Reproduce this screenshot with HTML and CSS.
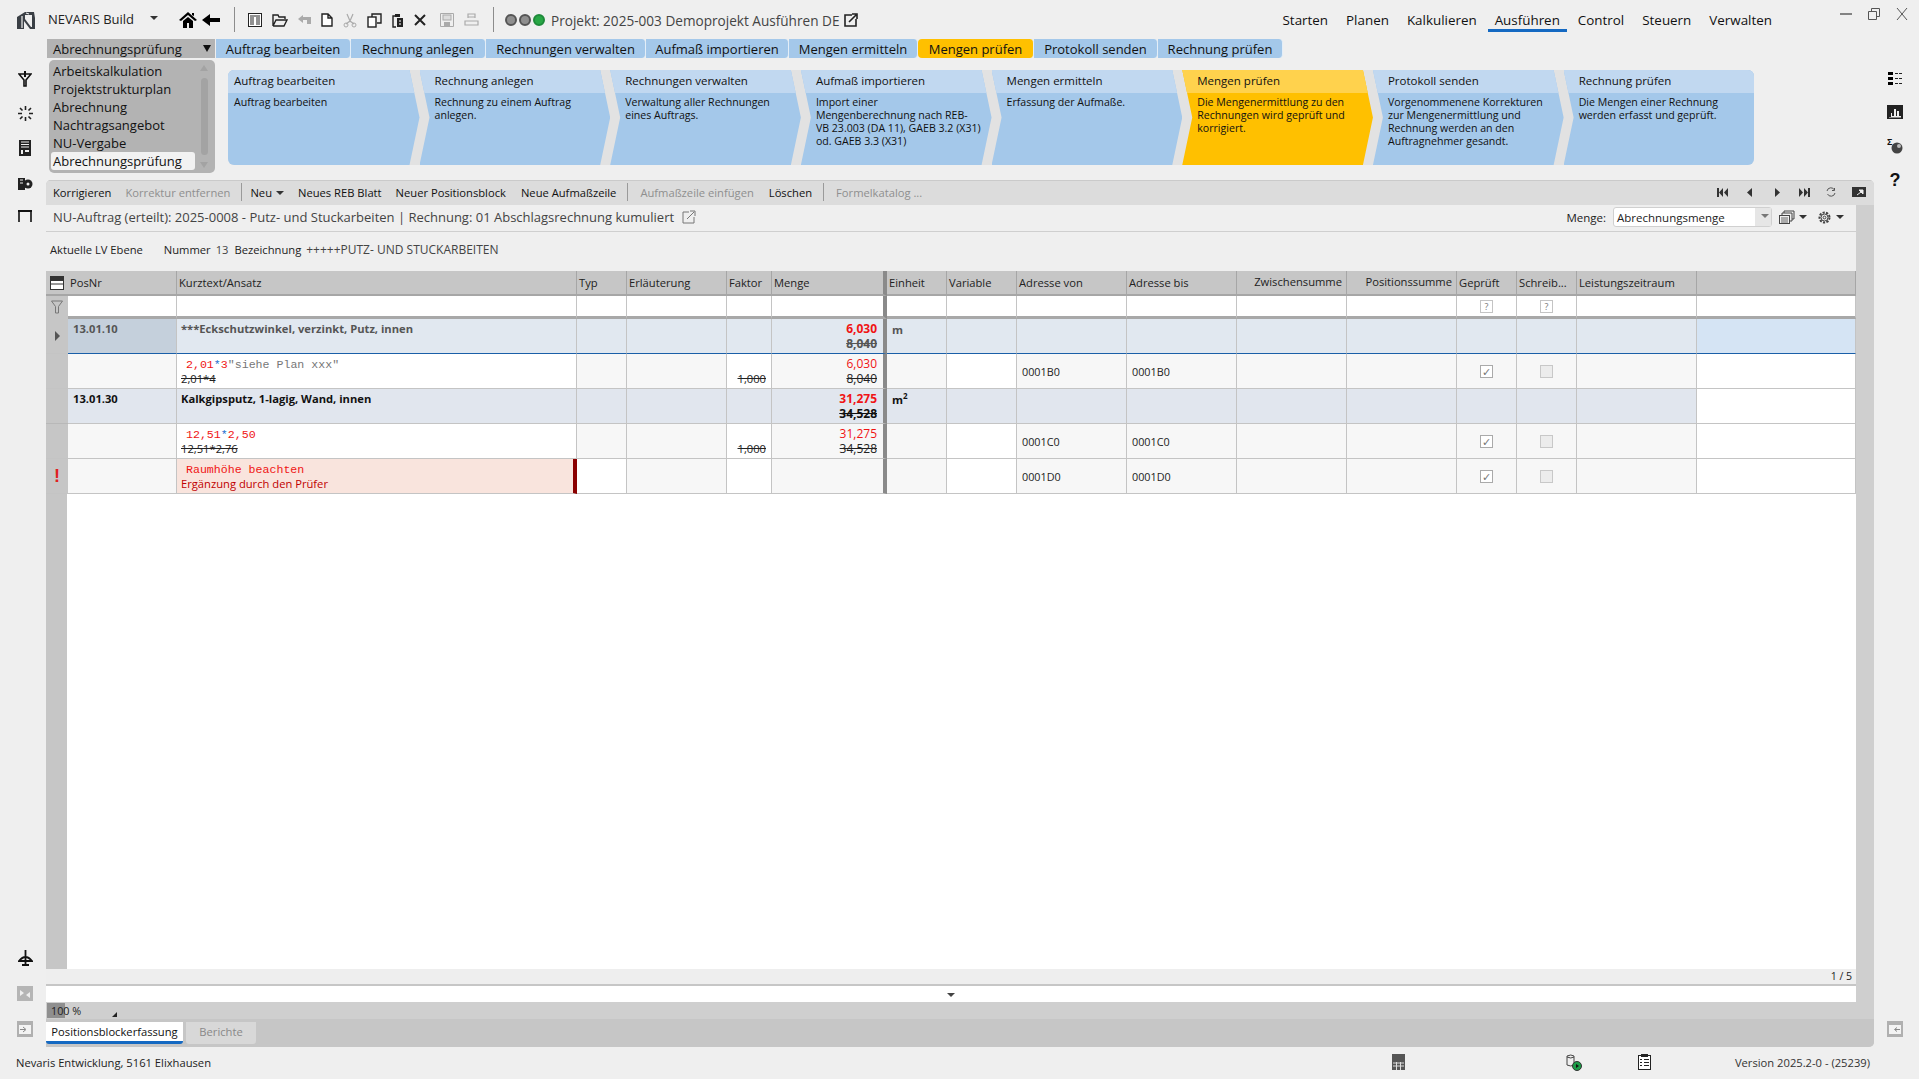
FILE: index.html
```html
<!DOCTYPE html>
<html lang="de">
<head>
  <meta charset="UTF-8">
  <title>NEVARIS Build</title>
  <link rel="stylesheet" href="styles.css">
</head>
<body>
  <!-- Titelleiste -->
  <header class="titlebar">
    <svg class="logo" width="20" height="20" viewBox="0 0 20 20"><path d="M1 7 L9 2 L18 2 L19 8 V19 H14 L8 11 V19 H1Z" fill="#3a3f45"/><path d="M6 6 V18 M13 4 L10 3" stroke="#efefef" stroke-width="1.2"/><path d="M9 5 H16 V17 H15 L9 9Z" fill="#efefef"/></svg>
    <span class="app-name">NEVARIS Build</span>
    <span class="caret app-caret"></span>
    <div class="quick">
      <svg width="18" height="18" viewBox="0 0 18 18"><path d="M9 1 L18 9 L16 10 L9 4 L2 10 L0 9Z M4 10 L9 6 L14 10 V17 H10 V12 H8 V17 H4Z M13 2 H15 V5 L13 4Z"/></svg>
      <svg width="18" height="18" viewBox="0 0 18 18"><path d="M0 9 L8 3 V7 H18 V11 H8 V15Z"/></svg>
    </div>
    <i class="tsep"></i>
    <div class="quick-files">
      <svg width="14" height="14" viewBox="0 0 14 14"><rect x=".5" y=".5" width="13" height="13" fill="#fff" stroke="#222"/><path d="M2 3 H12 M2 5 H6 M8 5 H12 M2 7 H6 M8 7 H12 M2 9 H6 M8 9 H12 M2 11 H6 M8 11 H12" stroke="#222"/></svg>
      <svg width="16" height="14" viewBox="0 0 16 14"><path d="M1 13 V2 H6 L7 4 H13 V6 M1 13 H12 L15 7 H4 L1 13" fill="none" stroke="#222" stroke-width="1.4"/></svg>
      <svg class="off" width="13" height="14" viewBox="0 0 13 14"><path d="M0 6 L5 2 V4 H13 V11 H9 V7 H5 V10Z" fill="#aaa"/></svg>
      <svg width="12" height="14" viewBox="0 0 12 14"><path d="M1 1 H7 L11 5 V13 H1Z M7 1 V5 H11" fill="#fff" stroke="#222" stroke-width="1.4"/></svg>
      <svg width="14" height="15" viewBox="0 0 14 15"><path d="M4 1 L7 8 L10 1 M7 8 L3 11 M7 8 L11 11" fill="none" stroke="#aaa" stroke-width="1.2"/><circle cx="3" cy="12" r="2" fill="none" stroke="#aaa"/><circle cx="11" cy="12" r="2" fill="none" stroke="#aaa"/></svg>
      <svg width="15" height="15" viewBox="0 0 15 15"><path d="M5 4 V1 H14 V10 H10" fill="none" stroke="#222" stroke-width="1.4"/><rect x="1" y="4" width="8" height="10" fill="#fff" stroke="#222" stroke-width="1.4"/></svg>
      <svg width="12" height="15" viewBox="0 0 12 15"><path d="M3 3 H1 V14 H4" fill="none" stroke="#222" stroke-width="1.4"/><rect x="3" y="1" width="5" height="3" fill="#222"/><rect x="5" y="5" width="6" height="9" fill="#222"/><path d="M7 8 H9 M7 11 H9" stroke="#fff"/></svg>
      <svg width="12" height="12" viewBox="0 0 12 12"><path d="M1 1 L11 11 M11 1 L1 11" stroke="#222" stroke-width="2"/></svg>
      <svg class="save" width="14" height="14" viewBox="0 0 14 14"><path d="M.5 .5 H13.5 V13.5 H.5Z" fill="none" stroke="#aaa"/><rect x="3" y="2" width="8" height="5" fill="#ddd" stroke="#aaa"/><rect x="4" y="9" width="6" height="4" fill="#aaa"/></svg>
      <svg width="15" height="14" viewBox="0 0 15 14"><path d="M4 5 V1 H11 V5 M1 8 H14 V12 H1Z M4 4 H11" fill="none" stroke="#aaa" stroke-width="1.2"/></svg>
    </div>
    <i class="tsep"></i>
    <div class="lights"><b></b><b></b><b class="green"></b></div>
    <span class="project">Projekt: 2025-003 Demoprojekt Ausführen DE</span>
    <svg class="ext" width="14" height="14" viewBox="0 0 14 14"><path d="M8 2 H1 V13 H12 V6" fill="none" stroke="#222" stroke-width="1.6"/><path d="M5 9 L12 2 M8 1 H13 V6" fill="none" stroke="#222" stroke-width="1.6"/></svg>
    <nav class="menu">
      <a>Starten</a><a>Planen</a><a>Kalkulieren</a><a class="active">Ausführen</a><a>Control</a><a>Steuern</a><a>Verwalten</a>
    </nav>
    <div class="winbtns">
      <svg width="12" height="12" viewBox="0 0 12 12"><path d="M0 6 H12" stroke="#555" stroke-width="1.4"/></svg>
      <svg width="12" height="12" viewBox="0 0 12 12"><path d="M.5 3.5 H8.5 V11.5 H.5Z M3.5 3 V.5 H11.5 V8.5 H9" fill="none" stroke="#555"/></svg>
      <svg width="12" height="12" viewBox="0 0 12 12"><path d="M1 0 L11 12 M11 0 L1 12" stroke="#555"/></svg>
    </div>
  </header>

  <div class="workspace">
    <!-- linke Leiste -->
    <aside class="rail">
      <div class="rail-top">
        <svg width="14" height="16" viewBox="0 0 14 16"><path d="M1 3 H13 L8 9 V15 H6 V9Z" fill="none" stroke="#111" stroke-width="1.6"/><path d="M7 0 V6" stroke="#111" stroke-width="2"/></svg>
        <svg width="15" height="15" viewBox="0 0 15 15"><path d="M7.5 0 V4 M7.5 11 V15 M0 7.5 H4 M11 7.5 H15 M2 2 L4.5 4.5 M10.5 10.5 L13 13 M13 2 L10.5 4.5 M2 13 L4.5 10.5" stroke="#222" stroke-width="1.6"/></svg>
        <svg width="12" height="16" viewBox="0 0 12 16"><rect width="12" height="16" fill="#222"/><path d="M2 2 H10 M2 4.5 H10 M2 7 H10" stroke="#efefef"/><rect x="2" y="10" width="2" height="4" fill="#efefef"/><rect x="6" y="10" width="4" height="2" fill="#efefef"/></svg>
        <svg width="16" height="16" viewBox="0 0 16 16"><path d="M1 3 H8 V15 H1Z" fill="#222"/><circle cx="11" cy="9" r="4.5" fill="#222"/><circle cx="11" cy="9" r="1.5" fill="#efefef"/><path d="M3 5 H6 M3 8 H6" stroke="#efefef"/></svg>
        <svg width="14" height="12" viewBox="0 0 14 12"><path d="M0 1 H14" stroke="#111" stroke-width="2"/><path d="M1 2 V12 M13 2 V12" stroke="#111" stroke-width="1.6"/></svg>
      </div>
      <div class="rail-bottom">
        <svg width="15" height="16" viewBox="0 0 15 16"><path d="M7.5 0 V16 M1 11 Q7.5 3 14 11 Z M4 15 H11" fill="none" stroke="#111" stroke-width="1.8"/></svg>
        <svg width="16" height="15" viewBox="0 0 16 15"><rect width="16" height="15" fill="#b5b5b5"/><path d="M3 4 L7 7 L3 10Z M13 6 L9 9 L13 12Z" fill="#efefef"/></svg>
        <svg width="16" height="16" viewBox="0 0 16 16"><rect width="16" height="16" fill="#b0b0b0"/><rect x="2" y="4" width="12" height="9" fill="#f3f3f3"/><path d="M3 8.5 H8 M6 6 L9 8.5 L6 11" fill="none" stroke="#888"/></svg>
      </div>
    </aside>

    <main class="center">
      <!-- Prozessleiste -->
      <div class="ribbon">
        <div class="module-select">Abrechnungsprüfung<span class="caret module-caret"></span></div>
        <div class="tabs">
          <a class="w1">Auftrag bearbeiten</a>
          <a class="w2">Rechnung anlegen</a>
          <a class="w3">Rechnungen verwalten</a>
          <a class="w4">Aufmaß importieren</a>
          <a class="w5">Mengen ermitteln</a>
          <a class="w6 on">Mengen prüfen</a>
          <a class="w7">Protokoll senden</a>
          <a class="w8">Rechnung prüfen</a>
        </div>
      </div>

      <div class="overview">
        <div class="modules">
          <ul>
            <li>Arbeitskalkulation</li>
            <li>Projektstrukturplan</li>
            <li>Abrechnung</li>
            <li>Nachtragsangebot</li>
            <li>NU-Vergabe</li>
            <li class="sel">Abrechnungsprüfung</li>
          </ul>
          <div class="scroll"><i class="up"></i><b></b><i class="down"></i></div>
        </div>

        <div class="steps">
          <section class="step first"><h3>Auftrag bearbeiten</h3><p>Auftrag bearbeiten</p></section>
          <section class="step"><h3>Rechnung anlegen</h3><p>Rechnung zu einem Auftrag anlegen.</p></section>
          <section class="step"><h3>Rechnungen verwalten</h3><p>Verwaltung aller Rechnungen eines Auftrags.</p></section>
          <section class="step"><h3>Aufmaß importieren</h3><p class="tight">Import einer<br>Mengenberechnung nach REB-<br>VB 23.003 (DA 11), GAEB 3.2 (X31)<br>od. GAEB 3.3 (X31)</p></section>
          <section class="step"><h3>Mengen ermitteln</h3><p>Erfassung der Aufmaße.</p></section>
          <section class="step on"><h3>Mengen prüfen</h3><p>Die Mengenermittlung zu den Rechnungen wird geprüft und korrigiert.</p></section>
          <section class="step"><h3>Protokoll senden</h3><p>Vorgenommenene Korrekturen zur Mengenermittlung und Rechnung werden an den Auftragnehmer gesandt.</p></section>
          <section class="step last"><h3>Rechnung prüfen</h3><p>Die Mengen einer Rechnung werden erfasst und geprüft.</p></section>
        </div>
      </div>

      <!-- Hauptbereich -->
      <div class="panel">
        <div class="toolbar">
          <a>Korrigieren</a>
          <a class="off">Korrektur entfernen</a>
          <i class="sep"></i>
          <a class="neu">Neu<span class="caret"></span></a>
          <a>Neues REB Blatt</a>
          <a>Neuer Positionsblock</a>
          <a class="more">Neue Aufmaßzeile</a>
          <i class="sep"></i>
          <a class="off more">Aufmaßzeile einfügen</a>
          <a class="more">Löschen</a>
          <i class="sep"></i>
          <a class="off more">Formelkatalog ...</a>
          <div class="pager">
            <svg width="11" height="9" viewBox="0 0 11 9"><path d="M0 0 H2 V9 H0Z M6 0 V9 L2 4.5Z M11 0 V9 L7 4.5Z" fill="#333"/></svg>
            <svg class="pg-a" width="5" height="9" viewBox="0 0 5 9"><path d="M5 0 V9 L0 4.5Z" fill="#333"/></svg>
            <svg class="pg-b" width="5" height="9" viewBox="0 0 5 9"><path d="M0 0 V9 L5 4.5Z" fill="#333"/></svg>
            <svg class="pg-a" width="11" height="9" viewBox="0 0 11 9"><path d="M11 0 H9 V9 H11Z M5 0 V9 L9 4.5Z M0 0 V9 L4 4.5Z" fill="#333"/></svg>
            <svg width="10" height="10" viewBox="0 0 10 10"><path d="M1 4 A4 4 0 0 1 8.5 3 M8.5 1 V3.5 H6 M9 6 A4 4 0 0 1 1.5 7" fill="none" stroke="#555"/></svg>
            <svg width="14" height="10" viewBox="0 0 14 10"><rect width="14" height="10" fill="#333"/><path d="M7 3 L11 3 L11 7Z M5 8 L9 5" fill="#efefef" stroke="#efefef"/></svg>
          </div>
        </div>

        <div class="panel-body">
          <div class="inner">
            <div class="infobar">
              <span class="crumb">NU-Auftrag (erteilt): 2025-0008 - Putz- und Stuckarbeiten | Rechnung: 01 Abschlagsrechnung kumuliert</span>
              <svg width="14" height="14" viewBox="0 0 14 14"><path d="M7 2 H1 V13 H12 V7" fill="none" stroke="#777"/><path d="M5 9 L12 2 M8 1 H13 V6" fill="none" stroke="#777"/></svg>
              <div class="qty">
                <label>Menge:</label>
                <div class="combo"><span>Abrechnungsmenge</span><em><span class="caret"></span></em></div>
                <svg class="layers" width="16" height="14" viewBox="0 0 16 14"><path d="M5 3 V1 H15 V9 H13 M3 5 V3 H13 V11 H11" fill="none" stroke="#444"/><rect x=".5" y="5.5" width="10" height="8" fill="#efefef" stroke="#444"/><path d="M2 8 H9 M2 10 H9 M2 12 H9" stroke="#666"/></svg>
                <span class="caret"></span>
                <svg class="gear" width="15" height="15" viewBox="0 0 15 15"><circle cx="7.5" cy="7.5" r="5" fill="none" stroke="#444" stroke-width="2" stroke-dasharray="2.2 1.3"/><circle cx="7.5" cy="7.5" r="3.5" fill="none" stroke="#444"/><circle cx="7.5" cy="7.5" r="1.4" fill="none" stroke="#444"/></svg>
                <span class="caret"></span>
              </div>
            </div>

            <div class="lvbar">
              <span class="lv-title">Aktuelle LV Ebene</span>
              <span class="lv-num">Nummer</span>
              <span class="lv-val">13</span>
              <span class="lv-bez">Bezeichnung</span>
              <span class="lv-val lv-name">+++++PUTZ- UND STUCKARBEITEN</span>
            </div>

            <div class="grid-wrap">
              <table class="grid">
                <colgroup>
                  <col class="c-head"><col class="c-pos"><col class="c-text"><col class="c-typ"><col class="c-erl"><col class="c-fak"><col class="c-menge"><col class="c-ein"><col class="c-var"><col class="c-adr"><col class="c-adr"><col class="c-sum"><col class="c-sum"><col class="c-chk"><col class="c-chk"><col class="c-zeit"><col>
                </colgroup>
                <thead>
                  <tr class="titles">
                    <th class="rh"><svg width="14" height="14" viewBox="0 0 14 14"><rect x=".5" y=".5" width="13" height="13" fill="#fff" stroke="#333"/><rect x="1" y="1" width="12" height="4" fill="#333"/><path d="M1 8 H13" stroke="#333"/></svg></th>
                    <th>PosNr</th><th>Kurztext/Ansatz</th><th>Typ</th><th>Erläuterung</th><th>Faktor</th><th class="thick">Menge</th><th>Einheit</th><th>Variable</th><th>Adresse von</th><th>Adresse bis</th><th class="ra">Zwischensumme</th><th class="ra">Positionssumme</th><th>Geprüft</th><th>Schreib...</th><th>Leistungszeitraum</th><th></th>
                  </tr>
                  <tr class="filter">
                    <th class="rh"><svg width="12" height="14" viewBox="0 0 12 14"><path d="M.5 1 H11.5 L7.5 6.5 V13 H4.5 V6.5Z" fill="none" stroke="#777"/></svg></th>
                    <td></td><td></td><td></td><td></td><td></td><td class="thick"></td><td></td><td></td><td></td><td></td><td></td><td></td>
                    <td class="mid"><i class="qbox">?</i></td><td class="mid"><i class="qbox">?</i></td><td></td><td></td>
                  </tr>
                </thead>
                <tbody>
                  <tr class="pos current">
                    <th class="rh"><span class="tri"></span></th>
                    <td class="num">13.01.10</td><td>***Eckschutzwinkel, verzinkt, Putz, innen</td><td></td><td></td><td></td>
                    <td class="thick val"><span class="red">6,030</span><s>8,040</s></td>
                    <td class="unit">m</td><td></td><td></td><td></td><td></td><td></td><td></td><td></td><td></td><td class="tail"></td>
                  </tr>
                  <tr class="sub">
                    <th class="rh"></th>
                    <td></td>
                    <td class="text"><code><span class="red">2,01</span><span class="blue">*</span><span class="red">3</span><span class="note">"siehe Plan xxx"</span></code><s>2,01*4</s></td>
                    <td></td><td></td>
                    <td class="white val"><span>&nbsp;</span><s>1,000</s></td>
                    <td class="thick val"><span class="red">6,030</span><s>8,040</s></td>
                    <td></td><td class="white"></td><td class="adr">0001B0</td><td class="adr">0001B0</td><td></td><td></td>
                    <td class="mid"><i class="chk">&#10003;</i></td><td class="mid"><i class="dis"></i></td><td></td><td class="white"></td>
                  </tr>
                  <tr class="pos plain">
                    <th class="rh"></th>
                    <td class="num">13.01.30</td><td>Kalkgipsputz, 1-lagig, Wand, innen</td><td></td><td></td><td></td>
                    <td class="thick val"><span class="red">31,275</span><s>34,528</s></td>
                    <td class="unit">m<sup>2</sup></td><td></td><td></td><td></td><td></td><td></td><td></td><td></td><td></td><td class="white"></td>
                  </tr>
                  <tr class="sub">
                    <th class="rh"></th>
                    <td></td>
                    <td class="text"><code><span class="red">12,51</span><span class="blue">*</span><span class="red">2,50</span></code><s>12,51*2,76</s></td>
                    <td></td><td></td>
                    <td class="white val"><span>&nbsp;</span><s>1,000</s></td>
                    <td class="thick val"><span class="red">31,275</span><s>34,528</s></td>
                    <td></td><td class="white"></td><td class="adr">0001C0</td><td class="adr">0001C0</td><td></td><td></td>
                    <td class="mid"><i class="chk">&#10003;</i></td><td class="mid"><i class="dis"></i></td><td></td><td class="white"></td>
                  </tr>
                  <tr class="sub">
                    <th class="rh bang">!</th>
                    <td></td>
                    <td class="text remark"><code class="red">Raumhöhe beachten</code><span>Ergänzung durch den Prüfer</span></td>
                    <td class="white"></td><td></td>
                    <td class="white"></td>
                    <td class="thick"></td>
                    <td></td><td class="white"></td><td class="adr">0001D0</td><td class="adr">0001D0</td><td></td><td></td>
                    <td class="mid"><i class="chk">&#10003;</i></td><td class="mid"><i class="dis"></i></td><td></td><td class="white"></td>
                  </tr>
                </tbody>
              </table>
            </div>

            <div class="grid-foot">1 / 5</div>
            <div class="splitter"><span class="tri-down"></span></div>
          </div>
          <div class="strip"></div>
        </div>

        <div class="zoombar">
          <div class="zoombox"><b></b><span>100 %</span><i></i></div>
        </div>
        <div class="doc-tabs">
          <a class="on">Positionsblockerfassung</a>
          <a>Berichte</a>
        </div>
      </div>
    </main>

    <!-- rechte Leiste -->
    <aside class="rail right">
      <div class="rail-top">
        <svg width="15" height="13" viewBox="0 0 15 13"><path d="M0 0 H5 V3 H0Z M0 5 H5 V8 H0Z M0 10 H5 V13 H0Z"/><path d="M7 1.5 H15 M7 6.5 H15 M7 11.5 H15" stroke="#222" stroke-dasharray="3 1"/></svg>
        <svg width="16" height="14" viewBox="0 0 16 14"><rect width="16" height="14" fill="#222"/><path d="M2 12 H4 V8 H5 V11 H7 V4 H9 V11 H10 V6 H12 V11 H14 V12.5 H2Z" fill="#efefef"/></svg>
        <svg class="sum-icon" width="16" height="16" viewBox="0 0 16 16"><text x="0" y="7" class="sigma">Σ</text><circle cx="10" cy="10" r="5.5" fill="#444"/><circle cx="12" cy="8" r="2" fill="#bbb"/></svg>
        <span class="help">?</span>
      </div>
      <div class="rail-bottom">
        <svg width="16" height="16" viewBox="0 0 16 16"><rect width="16" height="16" fill="#b0b0b0"/><rect x="2" y="4" width="12" height="9" fill="#f3f3f3"/><path d="M13 8.5 H8 M10 6.5 L7.5 8.5 L10 10.5" fill="none" stroke="#888"/></svg>
      </div>
    </aside>
  </div>

  <!-- Statusleiste -->
  <footer class="statusbar">
    <span class="firm">Nevaris Entwicklung, 5161 Elixhausen</span>
    <svg class="st-calc" width="13" height="16" viewBox="0 0 13 16"><rect width="13" height="16" fill="#555"/><path d="M1 9 H12 M1 12 H12 M4.5 8 V16 M8.5 8 V16" stroke="#ddd"/></svg>
    <svg class="st-db" width="16" height="17" viewBox="0 0 16 17"><path d="M1 2 V11 Q5 13 8 11 V2 Q5 0 1 2Z M1 3 Q5 5 8 3" fill="#efefef" stroke="#444"/><circle cx="11" cy="12" r="4.5" fill="#1a9c46" stroke="#333"/><path d="M10 10 L13 12 L10 14Z" fill="#111"/></svg>
    <svg class="st-list" width="13" height="16" viewBox="0 0 13 16"><rect x=".5" y="1.5" width="12" height="14" fill="#fff" stroke="#222"/><rect x="3" y="0" width="7" height="3" fill="#222"/><path d="M2 5.5 H4 M6 5.5 H11 M2 8.5 H4 M6 8.5 H11 M2 11.5 H4 M6 11.5 H11" stroke="#222"/></svg>
    <span class="version">Version 2025.2-0 - (25239)</span>
  </footer>
</body>
</html>
```

FILE: styles.css
```css
* {
  box-sizing: border-box;
}
html, body {
  margin: 0;
  height: 100%;
}
body {
  width: 1919px;
  height: 1079px;
  overflow: hidden;
  display: flex;
  flex-direction: column;
  background-color: #efefef;
  color: #222;
  font-family: "Open Sans", "Noto Sans", sans-serif;
  font-size: 11.5px;
}
svg {
  display: block;
  flex: none;
}
.caret {
  display: inline-block;
  width: 0;
  height: 0;
  border-left: 4px solid transparent;
  border-right: 4px solid transparent;
  border-top: 4px solid #333;
}

/* Titelleiste */
.titlebar {
  height: 39px;
  flex: none;
  display: flex;
  align-items: center;
  padding-left: 16px;
  padding-top: 1px;
}
.app-name {
  margin-left: 12px;
  font-size: 13px;
  color: #222;
  margin-top: -3px;
}
.app-caret {
  margin-left: 16px;
  margin-top: -4px;
}
.quick {
  margin-left: 21px;
  display: flex;
  gap: 5px;
}
.tsep {
  width: 1px;
  height: 25px;
  background-color: #8c8c8c;
  margin-left: 14px;
  margin-top: -2px;
}
.quick-files {
  display: flex;
  align-items: center;
  margin-left: 13px;
  gap: 10px;
}
.quick-files .save {
  margin-left: 4px;
}
.lights {
  display: flex;
  gap: 2px;
  margin-left: 11px;
}
.lights b {
  width: 12px;
  height: 12px;
  border-radius: 50%;
  background-color: #8f8f8f;
  border: 2px solid #555;
}
.lights .green {
  background-color: #28a745;
  border-color: #1e8a3a;
}
.project {
  margin-left: 6px;
  font-size: 13.6px;
  color: #444;
}
.ext {
  margin-left: 5px;
}
.menu {
  margin-left: auto;
  display: flex;
  gap: 18px;
  height: 100%;
  align-items: center;
  font-size: 13.4px;
  color: #111;
}
.menu a {
  position: relative;
  padding: 0;
}
.menu .active::after {
  content: "";
  position: absolute;
  left: -7px;
  right: -7px;
  bottom: -3px;
  height: 3px;
  background-color: #1469c2;
}
.winbtns {
  display: flex;
  gap: 16px;
  margin-left: 68px;
  padding-right: 11px;
  margin-top: -12px;
}

/* Arbeitsbereich */
.workspace {
  flex: 1;
  display: flex;
  min-height: 0;
}
.rail {
  width: 46px;
  flex: none;
  display: flex;
  flex-direction: column;
  align-items: center;
  justify-content: space-between;
  padding: 32px 0 10px 4px;
}
.rail-top {
  display: flex;
  flex-direction: column;
  align-items: center;
  gap: 19px;
}
.rail-bottom {
  display: flex;
  flex-direction: column;
  align-items: center;
  gap: 20px;
}
.rail.right {
  width: 45px;
  padding: 33px 3px 10px 0;
}
.rail.right .rail-top {
  gap: 20px;
}
.sum-icon {
  margin-top: -1px;
}
.help {
  margin-top: -3px;
  font: bold 18px/18px "Liberation Sans", sans-serif;
  color: #111;
}
.sigma {
  font: bold 9px "Liberation Sans", sans-serif;
  fill: #111;
}
.center {
  flex: 1;
  min-width: 0;
  display: flex;
  flex-direction: column;
}

/* Prozess-Tabs */
.ribbon {
  height: 19px;
  flex: none;
  display: flex;
  padding-left: 1px;
}
.module-select {
  width: 168px;
  background-color: #b3b3b3;
  font-size: 13px;
  line-height: 20px;
  padding-left: 6px;
  position: relative;
  color: #111;
}
.module-caret {
  position: absolute;
  right: 4px;
  top: 6px;
  border-left-width: 4px;
  border-right-width: 4px;
  border-top: 7px solid #111;
}
.tabs {
  display: flex;
  padding-left: 1px;
}
.tabs a {
  background-color: #a4c8ea;
  border-right: 1px solid #e3eef8;
  border-radius: 0 4px 4px 0;
  font-size: 13px;
  line-height: 20px;
  text-align: center;
  color: #111;
  white-space: nowrap;
}
.tabs .on {
  background-color: #ffc000;
  border-radius: 4px;
}
.w1 { width: 135px; }
.w2 { width: 135px; }
.w3 { width: 160px; }
.w4 { width: 143px; }
.w5 { width: 129px; }
.w6 { width: 116px; }
.w7 { width: 124px; }
.w8 { width: 125px; }

/* Module und Schritte */
.overview {
  height: 122px;
  flex: none;
  display: flex;
  align-items: flex-start;
  padding-left: 3px;
}
.modules {
  width: 166px;
  height: 113px;
  margin-top: 2px;
  background-color: #b3b3b3;
  border-radius: 5px;
  display: flex;
  padding: 2px;
}
.modules ul {
  list-style: none;
  margin: 0;
  padding: 0;
  flex: 1;
  font-size: 13px;
  line-height: 18px;
  color: #111;
}
.modules li {
  padding-left: 2px;
  height: 18px;
  white-space: nowrap;
}
.modules .sel {
  background-color: #f2f2f2;
  border-radius: 3px;
}
.scroll {
  width: 18px;
  display: flex;
  flex-direction: column;
  align-items: center;
  gap: 4px;
}
.scroll b {
  flex: 1;
  width: 7px;
  border-radius: 4px;
  background-color: #a3a3a3;
}
.scroll i {
  width: 0;
  height: 0;
  margin: 3px 0;
  border-left: 4px solid transparent;
  border-right: 4px solid transparent;
}
.scroll .up {
  border-bottom: 6px solid #a3a3a3;
}
.scroll .down {
  border-top: 6px solid #a3a3a3;
}
.steps {
  margin: 12px 0 0 13px;
  width: 1526px;
  height: 95px;
  display: flex;
  background-color: #e2e2e2;
  border-radius: 6px;
  overflow: hidden;
}
.step {
  flex: 0 0 190.7px;
  background-color: #a4c8ea;
  clip-path: polygon(0 0, calc(100% - 10px) 0, 100% 50%, calc(100% - 10px) 100%, 0 100%, 10px 50%);
}
.step.first {
  flex-basis: 191.5px;
  clip-path: polygon(0 0, calc(100% - 10px) 0, 100% 50%, calc(100% - 10px) 100%, 0 100%);
}
.step.last {
  flex: 1;
  clip-path: polygon(0 0, 100% 0, 100% 100%, 0 100%, 10px 50%);
}
.step h3 {
  margin: 0;
  height: 23px;
  padding-left: 15px;
  background-color: #c1d8f0;
  font-size: 11.5px;
  font-weight: 400;
  line-height: 21px;
  color: #111;
}
.step.first h3, .step.first p {
  padding-left: 6px;
}
.step p {
  margin: 0;
  padding: 3px 12px 0 15px;
  font-size: 10.6px;
  line-height: 13px;
  color: #111;
}
.step p.tight {
  padding-right: 0;
  white-space: nowrap;
}
.step.on {
  background-color: #ffc000;
}
.step.on h3 {
  background-color: #ffd24d;
}

/* Panel */
.panel {
  flex: 1;
  min-height: 0;
  display: flex;
  flex-direction: column;
  background-color: #cfcfcf;
  border-radius: 5px 5px 5px 0;
  overflow: hidden;
}
.toolbar {
  height: 25px;
  flex: none;
  display: flex;
  align-items: center;
  gap: 14px;
  padding: 0 0 2px 7px;
  background-color: #dcdcdc;
  border-top: 1px solid #cacaca;
  font-size: 11.2px;
  color: #111;
  white-space: nowrap;
}
.toolbar .off {
  color: #8f8f8f;
}
.toolbar .sep {
  width: 1px;
  height: 18px;
  background-color: #9a9a9a;
  margin: 0 -3px;
}
.toolbar .neu {
  margin-left: -3px;
}
.toolbar .more {
  margin-left: 1px;
}
.neu .caret {
  margin-left: 4px;
  vertical-align: 2px;
}
.pager {
  margin-left: auto;
  margin-right: 8px;
  display: flex;
  align-items: center;
  gap: 16px;
}
.pg-a {
  margin-left: 3px;
}
.pg-b {
  margin-left: 7px;
}
.panel-body {
  flex: 1;
  min-height: 0;
  display: flex;
}
.inner {
  flex: 1;
  min-width: 0;
  display: flex;
  flex-direction: column;
  background-color: #efefef;
}
.strip {
  width: 18px;
  flex: none;
}
.infobar {
  height: 27px;
  flex: none;
  display: flex;
  align-items: center;
  gap: 8px;
  padding: 0 0 2px 7px;
  border-bottom: 1px solid #cfcfcf;
}
.crumb {
  font-size: 13px;
  color: #444;
  white-space: nowrap;
}
.qty {
  margin-left: auto;
  display: flex;
  align-items: center;
  font-size: 11.5px;
  padding-right: 12px;
}
.qty label {
  margin-right: 7px;
}
.combo {
  width: 159px;
  height: 20px;
  display: flex;
  border: 1px solid #d0d0d0;
  border-radius: 3px;
  background-color: #fff;
  margin-right: 7px;
  line-height: 19px;
  padding-left: 3px;
}
.combo span:first-child {
  flex: 1;
}
.combo em {
  width: 16px;
  background-color: #e6e6e6;
  text-align: center;
  line-height: 15px;
}
.combo .caret {
  border-top-color: #777;
}
.qty .caret {
  margin-left: 4px;
  vertical-align: 2px;
}
.qty .gear {
  margin-left: 10px;
}
.lvbar {
  height: 39px;
  flex: none;
  display: flex;
  align-items: center;
  font-size: 11.2px;
  padding: 0 0 4px 4px;
  color: #222;
}
.lv-num {
  margin-left: 21px;
}
.lv-val {
  margin-left: 5px;
  color: #444;
}
.lv-name {
  font-size: 12px;
}
.lv-bez {
  margin-left: 6px;
}

/* Tabelle */
.grid-wrap {
  flex: 1;
  min-height: 0;
  background: linear-gradient(to right, #c6c6c6 21px, #fff 21px);
}
.grid {
  table-layout: fixed;
  width: 100%;
  border-collapse: separate;
  border-spacing: 0;
  font-size: 11.2px;
  color: #222;
}
.c-head { width: 22px; }
.c-pos { width: 109px; }
.c-text { width: 400px; }
.c-typ { width: 50px; }
.c-erl { width: 100px; }
.c-fak { width: 45px; }
.c-menge { width: 115px; }
.c-ein { width: 60px; }
.c-var { width: 70px; }
.c-adr { width: 110px; }
.c-sum { width: 110px; }
.c-chk { width: 60px; }
.c-zeit { width: 120px; }
.grid th, .grid td {
  padding: 0;
  border-right: 1px solid #c4c4c4;
  border-bottom: 1px solid #c4c4c4;
  font-weight: 400;
  overflow: hidden;
  white-space: nowrap;
}
.titles th {
  height: 25px;
  background-color: #c6c6c6;
  border-bottom: 2px solid #a6a6a6;
  border-right-color: #a6a6a6;
  text-align: left;
  padding: 0 2px 0 2px;
  color: #222;
}
.titles .ra {
  text-align: right;
  padding-right: 4px;
  padding-bottom: 3px;
}
.grid .rh {
  background-color: #c6c6c6;
  border-right: 0;
  padding: 0;
}
.grid .rh svg {
  margin: auto;
}
.rh .tri {
  display: block;
  width: 0;
  height: 0;
  margin: 0 auto;
  border-top: 5px solid transparent;
  border-bottom: 5px solid transparent;
  border-left: 5px solid #555;
}
.rh.bang {
  text-align: center;
  font: bold 18px "Liberation Sans", sans-serif;
  color: #e02020;
}
.filter th, .filter td {
  height: 23px;
  background-color: #fff;
  border-bottom: 3px solid #a8a8a8;
}
.filter .rh {
  border-bottom: 1px solid #c6c6c6;
}
.thick {
  border-right: 4px solid #8a8a8a !important;
}
.titles .thick {
  border-right-color: #8a8a8a !important;
}
.mid {
  text-align: center;
}
.qbox {
  display: block;
  width: 13px;
  height: 13px;
  margin: 0 auto;
  border: 1px solid #c4c4c4;
  background-color: #fff;
  font-style: normal;
  font-size: 9px;
  line-height: 11px;
  color: #777;
}
.pos td {
  height: 35px;
  vertical-align: top;
  font-weight: 700;
  padding-top: 2px;
}
.pos td.num {
  padding-left: 5px;
}
.pos td:nth-child(3) {
  padding-left: 4px;
}
.pos .unit {
  padding-left: 5px;
  padding-top: 3px;
}
.unit sup {
  font-size: 8px;
  line-height: 0;
}
.plain td {
  background-color: #e1e6ee;
  color: #111;
}
.plain .rh {
  border-bottom: 1px solid #b8b8b8;
}
.current td {
  background-color: #e1e8f0;
  color: #555;
  border-bottom: 1px solid #1a5fa8;
}
.current .num {
  background-color: #c5d0dc;
}
.current .tail {
  background-color: #d5e4f4;
}
.current s {
  color: #555;
}
.sub td {
  height: 35px;
  background-color: #f7f7f7;
}
.sub .rh {
  height: 35px;
}
.grid .white {
  background-color: #fff;
}
.val {
  vertical-align: top;
  text-align: right;
  padding-right: 5px !important;
  padding-top: 2px !important;
  font-size: 11.2px;
  line-height: 15px;
}
.val span, .val s {
  display: block;
}
.thick.val {
  padding-right: 6px !important;
  font-size: 12px;
}
.red {
  color: #f01414;
}
.blue {
  color: #1c6fd0;
}
.note {
  color: #777;
}
.sub .text {
  background-color: #fff;
  padding-left: 4px;
  vertical-align: top;
  padding-top: 3px;
}
.text code {
  display: block;
  margin-left: 5px;
  font-family: "Liberation Mono", monospace;
  font-size: 11.6px;
  line-height: 15px;
}
.text s {
  display: block;
  line-height: 14px;
  color: #222;
}
.text.remark {
  background-color: #f9e4dd;
  border-right: 4px solid #8b0000;
}
.remark span {
  display: block;
  line-height: 14px;
  color: #c00000;
}
.adr {
  padding-left: 5px !important;
  font-size: 10.8px;
}
.chk {
  display: block;
  width: 13px;
  height: 13px;
  margin: 0 auto;
  border: 1px solid #aaa;
  background-color: #fff;
  font-style: normal;
  font-size: 11px;
  line-height: 11px;
  color: #777;
}
.dis {
  display: block;
  width: 13px;
  height: 13px;
  margin: 0 auto;
  border: 1px solid #c8c8c8;
  background-color: #ececec;
}
.grid-foot {
  height: 15px;
  flex: none;
  background-color: #eee;
  text-align: right;
  padding-right: 4px;
  font-size: 10.5px;
  line-height: 14px;
  color: #222;
}
.splitter {
  height: 18px;
  flex: none;
  background-color: #fff;
  border-top: 2px solid #c6c6c6;
  display: flex;
  justify-content: center;
  padding-top: 7px;
}
.tri-down {
  width: 0;
  height: 0;
  border-left: 4px solid transparent;
  border-right: 4px solid transparent;
  border-top: 4px solid #444;
}
.zoombar {
  height: 17px;
  flex: none;
}
.zoombox {
  width: 73px;
  height: 17px;
  display: flex;
  align-items: center;
  position: relative;
  font-size: 10.8px;
  color: #222;
}
.zoombox b {
  position: absolute;
  left: 1px;
  top: 1px;
  width: 18px;
  height: 15px;
  background-color: #8f8f8f;
}
.zoombox span {
  position: relative;
  padding-left: 5px;
}
.zoombox i {
  position: absolute;
  right: 2px;
  bottom: 2px;
  width: 0;
  height: 0;
  border-left: 5px solid transparent;
  border-bottom: 5px solid #222;
}
.doc-tabs {
  height: 28px;
  flex: none;
  background-color: #c6c6c6;
  display: flex;
  gap: 3px;
  padding-top: 3px;
  font-size: 11.2px;
}
.doc-tabs a {
  height: 22px;
  line-height: 19px;
  padding: 0 5px;
  background-color: #d8d8d8;
  border-radius: 0 0 3px 3px;
  color: #888;
  text-align: center;
  width: 70px;
}
.doc-tabs .on {
  width: 137px;
  background-color: #fff;
  border-bottom: 3px solid #1469c2;
  color: #111;
  white-space: nowrap;
}

/* Statusleiste */
.statusbar {
  height: 32px;
  flex: none;
  display: flex;
  align-items: center;
  padding: 0 49px 2px 16px;
  font-size: 11.2px;
  color: #222;
}
.firm {
  width: 1376px;
}
.st-db {
  margin-left: 161px;
}
.st-list {
  margin-left: 56px;
}
.version {
  margin-left: auto;
  color: #333;
}
```
